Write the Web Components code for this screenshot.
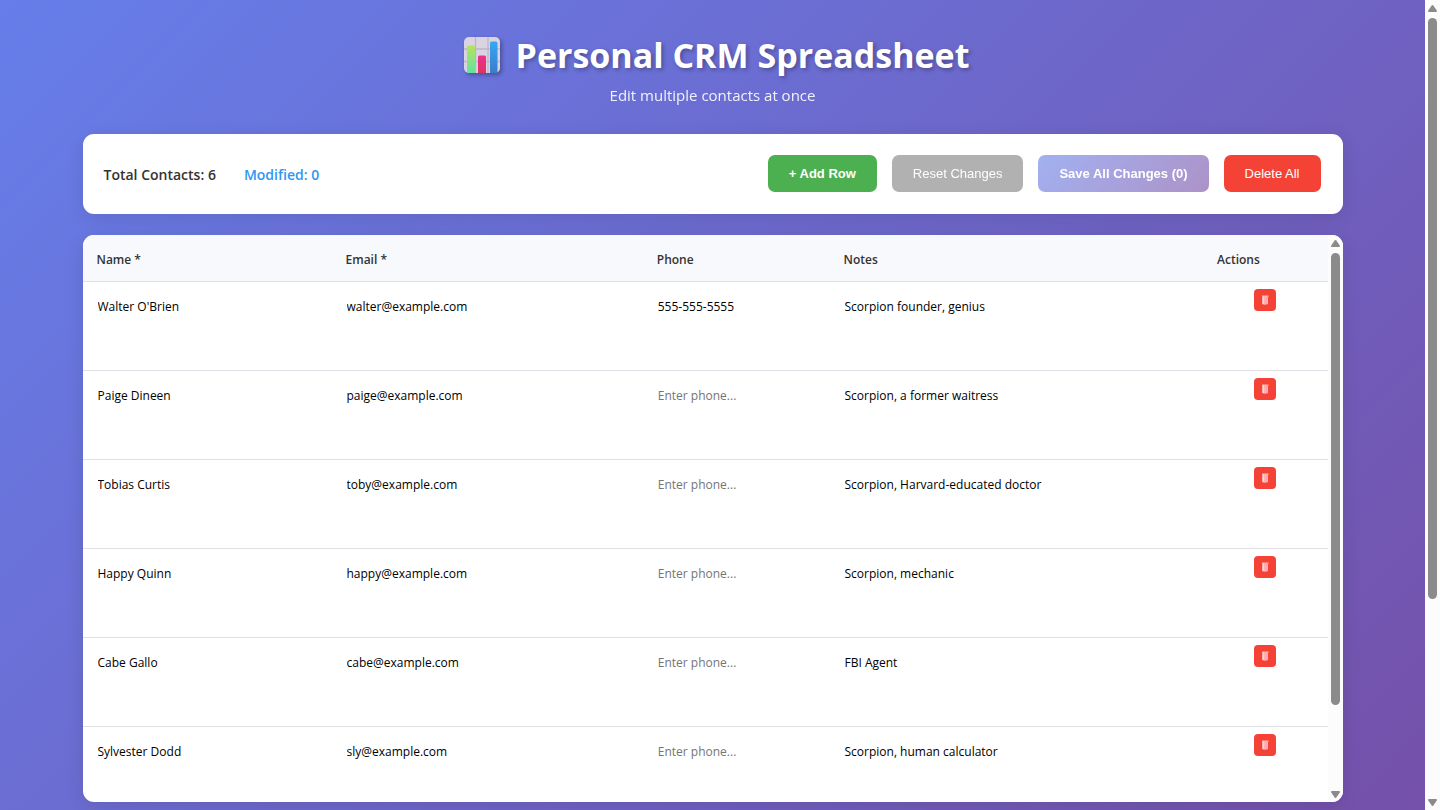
<!DOCTYPE html>
<html lang="en">
<head>
<meta charset="utf-8">
<title>Personal CRM Spreadsheet</title>
<style>
  body { margin: 0; font-family: "Open Sans", "Noto Sans", sans-serif; color: #333; }
</style>
</head>
<body>
<crm-app>
  <crm-header slot="header">
    <span slot="title">Personal CRM Spreadsheet</span>
    <span slot="subtitle">Edit multiple contacts at once</span>
  </crm-header>
  <crm-toolbar slot="toolbar">
    <span slot="total">Total Contacts: 6</span>
    <span slot="modified">Modified: 0</span>
    <crm-button slot="actions" variant="add">+ Add Row</crm-button>
    <crm-button slot="actions" variant="reset" disabled>Reset Changes</crm-button>
    <crm-button slot="actions" variant="save" disabled>Save All Changes (0)</crm-button>
    <crm-button slot="actions" variant="danger">Delete All</crm-button>
  </crm-toolbar>
  <crm-table slot="table"></crm-table>
</crm-app>

<script>
const define = (name, html, setup) => {
  const template = document.createElement('template');
  template.innerHTML = html;
  customElements.define(name, class extends HTMLElement {
    constructor() {
      super();
      this.attachShadow({ mode: 'open' }).append(template.content.cloneNode(true));
    }
    connectedCallback() {
      if (setup && !this.ready) { this.ready = true; setup(this, this.shadowRoot); }
    }
  });
};

define('scroll-rail', `
  <style>
    :host { display: flex; flex-direction: column; align-items: center; width: 15px; flex: none; box-sizing: border-box; padding: 5px 0 4px; background: #fcfcfc; }
    svg { display: block; width: 9px; height: 7px; fill: #8b8b8b; flex: none; }
    .track { flex: 1; width: 9px; margin: 6px 0; }
    .thumb { height: var(--thumb, 75%); border-radius: 5px; background: #8b8b8b; }
  </style>
  <svg viewBox="0 0 9 7" aria-hidden="true"><path d="M3.7.6Q4.5-.5 5.3.6L8.8 5.6Q9.3 7 8 7H1Q-.3 7 .2 5.6Z"/></svg>
  <div class="track"><div class="thumb"></div></div>
  <svg viewBox="0 0 9 7" aria-hidden="true"><path d="M3.7 6.4Q4.5 7.5 5.3 6.4L8.8 1.4Q9.3 0 8 0H1Q-.3 0 .2 1.4Z"/></svg>
`);

define('crm-app', `
  <style>
    :host { display: flex; height: 100vh; overflow: hidden; }
    .view { flex: 1; min-width: 0; overflow: hidden; padding: 0 20px; background: linear-gradient(135deg, #667eea, #764ba2) 0 0 / 100% 133vh; }
    main { max-width: 1260px; margin: 0 auto; }
  </style>
  <div class="view"><main>
    <slot name="header"></slot>
    <slot name="toolbar"></slot>
    <slot name="table"></slot>
  </main></div>
  <scroll-rail style="--thumb: 75%"></scroll-rail>
`);

define('chart-icon', `
  <style>
    :host { display: block; width: 38px; height: 38px; }
    svg { display: block; width: 100%; height: 100%; filter: drop-shadow(2px 2px 2px rgba(0,0,0,.3)); }
  </style>
  <svg viewBox="0 0 38 38" aria-hidden="true">
    <defs>
      <linearGradient id="g" x1="0" y1="0" x2="0" y2="1"><stop offset="0" stop-color="#b6e45c"/><stop offset="1" stop-color="#63e2a0"/></linearGradient>
      <linearGradient id="p" x1="0" y1="0" x2="0" y2="1"><stop offset="0" stop-color="#ec2f92"/><stop offset="1" stop-color="#dc3560"/></linearGradient>
      <linearGradient id="b" x1="0" y1="0" x2="0" y2="1"><stop offset="0" stop-color="#35a8f5"/><stop offset="1" stop-color="#3d7bc9"/></linearGradient>
    </defs>
    <rect x="1" y="1" width="36" height="36" rx="5" fill="#d9d3e2"/>
    <path d="M12.5 1v36M25 1v36M1 13h36M1 25.500h36" stroke="#bdb6c8" stroke-width="1.300" fill="none"/>
    <path d="M4 37V11q0-1.500 1.500-1.500h5Q12 9.500 12 11v26Z" fill="url(#g)"/>
    <path d="M15 37V21q0-1.500 1.500-1.500h5Q23 19.500 23 21v16Z" fill="url(#p)"/>
    <path d="M27 37V7q0-1.500 1.500-1.500h4Q34.500 5.500 34.500 7v30Z" fill="url(#b)"/>
  </svg>
`);

define('crm-header', `
  <style>
    :host { display: block; text-align: center; padding: 30px 0 27px; color: #fff; }
    h1 { display: flex; justify-content: center; align-items: center; gap: 15px; margin: 0; padding-left: 7px; font-size: 34px; line-height: 50px; font-weight: 700; text-shadow: 2px 2px 4px rgba(0,0,0,.3); }
    p { margin: 3px 0 0; font-size: 15px; line-height: 24px; opacity: .9; }
  </style>
  <h1><chart-icon></chart-icon><slot name="title"></slot></h1>
  <p><slot name="subtitle"></slot></p>
`);

define('crm-button', `
  <style>
    :host { display: block; }
    button { display: block; height: 37px; padding: 0 21px; border: 0; border-radius: 7px; font: 700 13px/16px "Liberation Sans", Arial, sans-serif; color: #fff; white-space: nowrap; cursor: pointer; background: #4caf50; }
    :host([variant="reset"]) button { background: #9e9e9e; font-weight: 400; opacity: .8; }
    :host([variant="save"]) button { background: linear-gradient(135deg, #667eea, #764ba2); opacity: .6; }
    :host([variant="danger"]) button { background: #f44336; font-weight: 400; }
  </style>
  <button type="button"><slot></slot></button>
`, (host, root) => { root.querySelector('button').disabled = host.hasAttribute('disabled'); });

define('crm-toolbar', `
  <style>
    :host { display: flex; justify-content: space-between; align-items: flex-start; box-sizing: border-box; min-height: 80px; padding: 21px 22px 19px 21px; margin-bottom: 21px; background: #fff; border-radius: 11px; box-shadow: 0 4px 18px rgba(0,0,0,.1); }
    .stats { display: flex; gap: 28px; font-size: 14px; line-height: 40px; font-weight: 600; }
    .modified { color: #2f96f3; }
    .actions { display: flex; gap: 15px; }
  </style>
  <div class="stats"><div><slot name="total"></slot></div><div class="modified"><slot name="modified"></slot></div></div>
  <div class="actions"><slot name="actions"></slot></div>
`);

const contacts = [
  ["Walter O'Brien", 'walter@example.com', '555-555-5555', 'Scorpion founder, genius'],
  ['Paige Dineen', 'paige@example.com', '', 'Scorpion, a former waitress'],
  ['Tobias Curtis', 'toby@example.com', '', 'Scorpion, Harvard-educated doctor'],
  ['Happy Quinn', 'happy@example.com', '', 'Scorpion, mechanic'],
  ['Cabe Gallo', 'cabe@example.com', '', 'FBI Agent'],
  ['Sylvester Dodd', 'sly@example.com', '', 'Scorpion, human calculator']
];

define('crm-table', `
  <style>
    :host { display: flex; height: 70vh; overflow: hidden; background: #fff; border-radius: 11px; box-shadow: 0 4px 18px rgba(0,0,0,.1); }
    .scroller { flex: 1; min-width: 0; overflow: hidden; }
    table { width: 100%; table-layout: fixed; border-collapse: separate; border-spacing: 0; }
    th { padding: 16px 14px 12px; text-align: left; font-size: 12px; line-height: 18px; font-weight: 600; background: #f8f9fc; border-bottom: 1px solid #dee2e6; }
    td { height: 88px; box-sizing: content-box; padding: 0; vertical-align: top; border-bottom: 1px solid #e0e0e6; }
    .field { padding: 7px; }
    input, textarea { display: block; box-sizing: border-box; width: 100%; margin: 0; padding: 7px; border: 1px solid transparent; border-radius: 4px; background: transparent; color: #000; font-family: inherit; font-size: 12px; line-height: 19px; height: 35px; outline: none; resize: none; overflow: hidden; }
    textarea { height: 72px; }
    ::placeholder { color: #757575; opacity: 1; }
    .remove { display: flex; justify-content: center; padding: 7px; }
    button { display: grid; place-items: center; width: 22px; height: 22px; padding: 0; border: 0; border-radius: 4px; background: #f44336; cursor: pointer; }
    svg { display: block; width: 8px; height: 10px; }
  </style>
  <div class="scroller">
    <table>
      <colgroup><col style="width:20%"><col style="width:25%"><col style="width:15%"><col style="width:30%"><col style="width:10%"></colgroup>
      <thead><tr><th scope="col">Name *</th><th scope="col">Email *</th><th scope="col">Phone</th><th scope="col">Notes</th><th scope="col">Actions</th></tr></thead>
      <tbody></tbody>
    </table>
  </div>
  <scroll-rail style="--thumb: 85%"></scroll-rail>
  <template>
    <tr>
      <td><div class="field"><input type="text" aria-label="Name"></div></td>
      <td><div class="field"><input type="email" aria-label="Email"></div></td>
      <td><div class="field"><input type="tel" aria-label="Phone" placeholder="Enter phone..."></div></td>
      <td><div class="field"><textarea aria-label="Notes"></textarea></div></td>
      <td><div class="remove"><button type="button" aria-label="Delete contact">
        <svg viewBox="0 0 8 10" aria-hidden="true"><path d="M1 .5h6V9q-3 1.500-6 0Z" fill="#fcb5ae"/><path d="M2.500 1v8" stroke="#f8d6d6" stroke-width="1"/><path d="M5.500 2v7" stroke="#ff9fb8" stroke-width="1"/><path d="M6.500 .5H8V2H6.500Z" fill="#ff8a2a"/></svg>
      </button></div></td>
    </tr>
  </template>
`, (host, root) => {
  const row = root.querySelector('template');
  const body = root.querySelector('tbody');
  for (const contact of contacts) {
    const copy = row.content.cloneNode(true);
    copy.querySelectorAll('input, textarea').forEach((field, i) => { field.value = contact[i]; });
    body.append(copy);
  }
});
</script>
</body>
</html>
